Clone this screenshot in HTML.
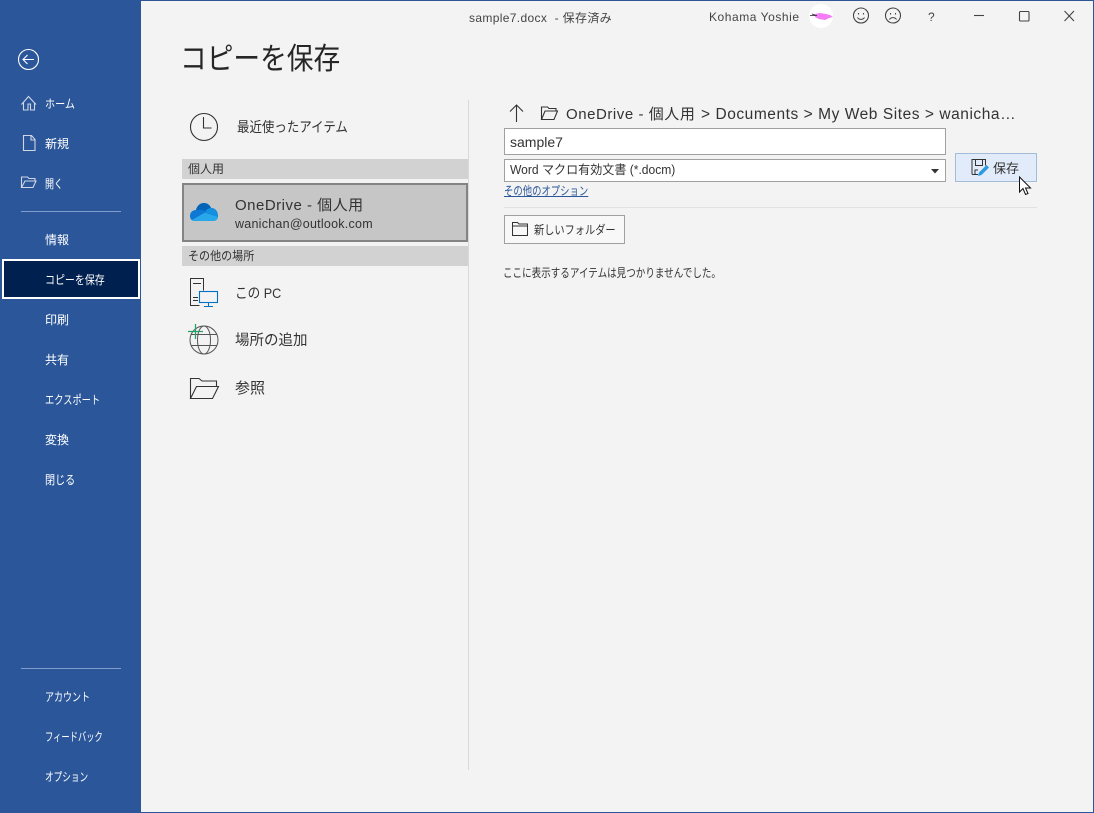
<!DOCTYPE html>
<html lang="ja"><head><meta charset="utf-8"><title>コピーを保存</title>
<style>
html,body{margin:0;padding:0;width:1094px;height:813px;overflow:hidden;background:#f3f3f3}
body{position:relative;font-family:"Liberation Sans","Noto Sans CJK JP",sans-serif;color:#333}
.a{position:absolute}
.t{position:absolute;white-space:nowrap;transform-origin:0 50%;line-height:20px;height:20px}
.s{color:#fff;font-size:12px}
svg{position:absolute;overflow:visible}
</style></head><body>
<div class="a" style="left:0;top:0;width:1094px;height:813px;box-sizing:border-box;border:1px solid #2b579a"></div>
<div class="a" style="left:0;top:0;width:141px;height:813px;background:#2b579a"></div>

<!-- sidebar -->
<svg style="left:0;top:0" width="141" height="813" fill="none">
<g stroke="#fff" stroke-width="1.1"><circle cx="28.5" cy="59.5" r="10"/><path d="M23 59.5h11M27.5 55l-4.5 4.5 4.500 4.500"/></g>
<g stroke="#cfd6e4" stroke-width="1.1">
<path d="M21.500 104.500l7-8 7.500 8M23.500 102.500v7.500h4.500v-6h2.500v6h4v-7.500"/>
<path d="M23.500 135.500h8l3.500 4v11h-11.500zM31 135.500v4.500h4"/>
<path d="M21.500 187.500v-10.500h6l1.500 1.500h6v2.500M21.500 187.500l3.500-6.500h11l-3 6.500z"/>
</g>
<path d="M21 211.500h100M21 668.500h100" stroke="#7f9ccb"/>
</svg>
<div class="a" style="left:2px;top:259px;width:138px;height:40px;box-sizing:border-box;border:2px solid #fff;background:#002050"></div>
<span class="t s" style="left:45px;top:94px;transform:scaleX(.84)">ホーム</span>
<span class="t s" style="left:45px;top:134px">新規</span>
<span class="t s" style="left:45px;top:174px;transform:scaleX(.75)">開く</span>
<span class="t s" style="left:45px;top:230px">情報</span>
<span class="t s" style="left:45px;top:270px;transform:scaleX(.83)">コピーを保存</span>
<span class="t s" style="left:45px;top:310px">印刷</span>
<span class="t s" style="left:45px;top:350px">共有</span>
<span class="t s" style="left:45px;top:390px;transform:scaleX(.77)">エクスポート</span>
<span class="t s" style="left:45px;top:430px">変換</span>
<span class="t s" style="left:45px;top:470px;transform:scaleX(.84)">閉じる</span>
<span class="t s" style="left:45px;top:687px;transform:scaleX(.75)">アカウント</span>
<span class="t s" style="left:45px;top:727px;transform:scaleX(.69)">フィードバック</span>
<span class="t s" style="left:45px;top:767px;transform:scaleX(.72)">オプション</span>

<!-- title bar -->
<span class="t" style="left:469px;top:8px;font-size:12px;color:#444;letter-spacing:.35px">sample7.docx&nbsp; - 保存済み</span>
<span class="t" style="left:709px;top:7px;font-size:12px;color:#444;letter-spacing:.55px">Kohama Yoshie</span>
<div class="a" style="left:809px;top:4px;width:24px;height:24px;border-radius:50%;background:#fff"></div>
<svg style="left:0;top:0" width="1094" height="40" fill="none">
<path d="M815 14l5-1 6 1 4 1 3 2-4 1-4 2-6-1-4-2z" fill="#f47cf5"/>
<path d="M810 15.500h7M812 14l3 1" stroke="#222" stroke-width=".8"/>
<g stroke="#444" stroke-width="1.100">
<circle cx="861" cy="15.500" r="7.500"/><path d="M857.500 17.500c1.500 2.500 5.500 2.500 7 0M858.500 13v1.500M863.500 13v1.500"/>
<circle cx="893" cy="15.500" r="7.500"/><path d="M889.500 19.500c1.500-2.500 5.500-2.500 7 0M890.500 13v1.500M895.500 13v1.500"/>
<path d="M974 15.500h10"/>
<rect x="1019.500" y="11.500" width="9.500" height="9.500" rx="1"/>
<path d="M1064.500 11l9.500 10M1074 11l-9.500 10"/>
</g>
</svg>
<span class="t" style="left:928px;top:7px;font-size:12px;color:#444">?</span>

<!-- heading -->
<span class="t" style="left:180px;top:40px;height:40px;line-height:40px;font-size:30px;color:#262626;transform:scaleX(.89)">コピーを保存</span>

<!-- left column -->
<div class="a" style="left:468px;top:100px;width:1px;height:670px;background:#d9d9d9"></div>
<svg style="left:0;top:0" width="480" height="420" fill="none">
<circle cx="204" cy="127" r="13.500" stroke="#333" stroke-width="1.100"/><path d="M203.500 117v11h8" stroke="#333" stroke-width="1.100"/>
</svg>
<span class="t" style="left:237px;top:117px;font-size:14px;transform:scaleX(.89)">最近使ったアイテム</span>
<div class="a" style="left:182px;top:159px;width:286px;height:20px;background:#d2d2d2"></div>
<span class="t" style="left:188px;top:159px;font-size:12px">個人用</span>
<div class="a" style="left:182px;top:183px;width:286px;height:59px;box-sizing:border-box;border:2px solid #848484;background:#c6c6c6"></div>
<svg style="left:0;top:0" width="480" height="420">
<path d="M195 221C191 221 190 218 190 216C190 212 193 210 196 210C197 206 200 203 204 203C207 203 210 205 211 208C215 208 218 211 218 216C218 219 216 221 213 221Z" fill="#0f78d4"/>
<path d="M196 210C197 206 200 203 204 203C207 203 210 205 211 208C209 208 207 209 205.500 211C203 210 200 209.500 196 210Z" fill="#0364b8"/>
<path d="M205.500 212L206 210.500C207 209 209 208 211 208C215 208 218 211 218 216V217Z" fill="#1490df"/>
<path d="M195 221C193.500 221 192.500 220.500 192 220L205 212.500L218 217C218 219 216 221 213 221Z" fill="#28a8ea"/>
</svg>
<span class="t" style="left:235px;top:196px;font-size:15px;color:#333;letter-spacing:.5px">OneDrive - 個人用</span>
<span class="t" style="left:235px;top:214px;font-size:12.500px;color:#333;letter-spacing:.25px">wanichan@outlook.com</span>
<div class="a" style="left:182px;top:246px;width:286px;height:20px;background:#d2d2d2"></div>
<span class="t" style="left:188px;top:246px;font-size:12px;transform:scaleX(.92)">その他の場所</span>

<svg style="left:0;top:0" width="480" height="420" fill="none">
<g stroke="#333" stroke-width="1">
<path d="M199.500 305.500h-9v-27h13v12"/><path d="M193 283.500h8M193 297.500h5M193 300.500h5"/>
</g>
<g stroke="#0072c6" stroke-width="1.100"><rect x="199.500" y="291.500" width="18" height="11"/><path d="M208.500 303v3.500M204 306.500h9"/></g>
<g stroke="#555" stroke-width="1"><circle cx="204" cy="340" r="14"/><ellipse cx="204" cy="340" rx="6.500" ry="14"/><path d="M191 334.500h26M191 345.500h26"/></g>
<path d="M195.500 324v15M188 331.500h15" stroke="#21a366" stroke-width="1.200"/>
<g stroke="#333" stroke-width="1.100"><path d="M190.500 398.500v-20h8.500l3 2.500h14.500v5"/><path d="M190.500 398.500l6-12h22l-6 12z"/></g>
</svg>
<span class="t" style="left:235px;top:283px;font-size:14px;color:#333;transform:scaleX(.9)">この PC</span>
<span class="t" style="left:235px;top:331px;font-size:14.500px;color:#333">場所の追加</span>
<span class="t" style="left:235px;top:379px;font-size:15px;color:#333">参照</span>

<!-- right column -->
<svg style="left:0;top:0" width="1094" height="300" fill="none">
<path d="M516.500 122v-17M510 111.500l6.500-6.500 6.500 6.500" stroke="#333" stroke-width="1.100"/>
<g stroke="#333" stroke-width="1.100"><path d="M541.500 119.500v-12.500h6l1.500 1.500h7v2.500"/><path d="M541.500 119.500l3.500-8.500h12.500l-3.500 8.500z"/></g>
</svg>
<span class="t" style="left:566px;top:105px;font-size:15px;color:#333;letter-spacing:.55px">OneDrive - 個人用</span>
<span class="t" style="left:701px;top:105px;font-size:15.500px;color:#333;letter-spacing:.55px">&gt; Documents &gt; My Web Sites &gt; wanicha…</span>

<div class="a" style="left:504px;top:128px;width:442px;height:27px;box-sizing:border-box;border:1px solid #a0a0a0;background:#fff"></div>
<span class="t" style="left:510px;top:132px;font-size:14px;color:#333">sample7</span>
<div class="a" style="left:504px;top:159px;width:442px;height:23px;box-sizing:border-box;border:1px solid #a0a0a0;background:#fff"></div>
<span class="t" style="left:510px;top:160px;font-size:12.500px;color:#333;transform:scaleX(.965)">Word マクロ有効文書 (*.docm)</span>
<svg style="left:0;top:0" width="1094" height="200"><path d="M931 169h8l-4 4.500z" fill="#333"/></svg>
<span class="t" style="left:504px;top:181px;font-size:12px;color:#2b579a;text-decoration:underline;transform:scaleX(.78)">その他のオプション</span>

<div class="a" style="left:955px;top:153px;width:82px;height:29px;box-sizing:border-box;border:1px solid #a3bdd8;background:#e1ebf9"></div>
<svg style="left:0;top:0" width="1094" height="200" fill="none">
<path d="M978 174.500h-5c-.6 0-1-.4-1-1v-14h13.500v6" stroke="#333"/>
<path d="M975.500 159.500v6h7v-6M975 174v-4h3" stroke="#333"/>
<path d="M978 176l1-3.500 7.500-7.500 2.500 2.500-7.500 7.500z" fill="#2b9ae0"/>
</svg>
<span class="t" style="left:993px;top:159px;font-size:13px;color:#333">保存</span>
<svg style="left:0;top:0" width="1094" height="210"><path d="M1019.500 177v15l3.500-3.500 2.500 6 2.500-1-2.500-5.500h5z" fill="#fff" stroke="#111" stroke-width="1"/></svg>

<div class="a" style="left:504px;top:207px;width:533px;height:1px;background:#e1e1e1"></div>
<div class="a" style="left:504px;top:215px;width:121px;height:29px;box-sizing:border-box;border:1px solid #a0a0a0;background:#f8f8f8"></div>
<svg style="left:0;top:0" width="600" height="260" fill="none"><path d="M512.500 235.500v-13h5l1.500 1.500h8.500v11.500zM512.500 226h15" stroke="#333" stroke-width="1"/></svg>
<span class="t" style="left:534px;top:220px;font-size:12px;color:#333;transform:scaleX(.85)">新しいフォルダー</span>
<span class="t" style="left:503px;top:263px;font-size:12px;color:#333;transform:scaleX(.796)">ここに表示するアイテムは見つかりませんでした。</span>
</body></html>
